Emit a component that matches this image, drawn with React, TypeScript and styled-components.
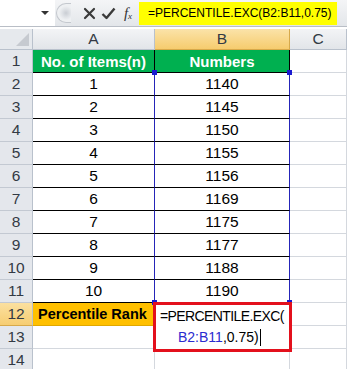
import styled, { createGlobalStyle, css } from "styled-components";

const GlobalStyle = createGlobalStyle`
  html, body {
    margin: 0;
    padding: 0;
    background: #ffffff;
    overflow: hidden;
  }
  body {
    font-family: "Liberation Sans", Arial, sans-serif;
  }
`;

type Kind = "plain" | "green" | "orange" | "data";

const items = [
  { n: 1, value: 1140 },
  { n: 2, value: 1145 },
  { n: 3, value: 1150 },
  { n: 4, value: 1155 },
  { n: 5, value: 1156 },
  { n: 6, value: 1169 },
  { n: 7, value: 1175 },
  { n: 8, value: 1177 },
  { n: 9, value: 1188 },
  { n: 10, value: 1190 }
];

export default function App() {
  return (
    <Window>
      <GlobalStyle />
      <FormulaBar>
        <NameBox>
          <DropArrow />
        </NameBox>
        <Grip />
        <BarButton gap={9}>
          <svg width="13" height="13" viewBox="0 0 13 13">
            <path
              d="M2 2 L11 11 M11 2 L2 11"
              stroke="#3a3a3a"
              strokeWidth="2.2"
              strokeLinecap="round"
            />
          </svg>
        </BarButton>
        <BarButton gap={1}>
          <svg width="15" height="13" viewBox="0 0 15 13">
            <path
              d="M1.5 7 L5.5 11 L13.5 1.5"
              stroke="#3a3a3a"
              strokeWidth="2.4"
              fill="none"
              strokeLinejoin="round"
            />
          </svg>
        </BarButton>
        <FxLabel>
          f<FxSub>x</FxSub>
        </FxLabel>
        <FormulaInput>=PERCENTILE.EXC(B2:B11,0.75)</FormulaInput>
      </FormulaBar>

      <Sheet>
        <Corner>
          <CornerTriangle />
        </Corner>
        <ColHeader>A</ColHeader>
        <ColHeader active>B</ColHeader>
        <ColHeader>C</ColHeader>

        <RowHeader>1</RowHeader>
        <Cell kind="green">No. of Items(n)</Cell>
        <Cell kind="green">Numbers</Cell>
        <Cell kind="plain" />

        {items.map((item, i) => (
          <Row key={item.n}>
            <RowHeader>{item.n + 1}</RowHeader>
            <Cell kind="data" blueRight>
              {item.n}
            </Cell>
            <Cell kind="data" blueRight>
              {i === 0 && (
                <>
                  <Handle side="left" edge="top" />
                  <Handle side="right" edge="top" />
                </>
              )}
              {i === items.length - 1 && (
                <>
                  <Handle side="left" edge="bottom" />
                  <Handle side="right" edge="bottom" />
                </>
              )}
              {item.value}
            </Cell>
            <Cell kind="plain" />
          </Row>
        ))}

        <RowHeader active>12</RowHeader>
        <Cell kind="orange">Percentile Rank</Cell>
        <Cell kind="plain">
          <EditBox>
            <EditLine tight>=PERCENTILE.EXC(</EditLine>
            <EditLine indent>
              <RefText>B2:B11</RefText>,0.75)
              <Caret />
            </EditLine>
          </EditBox>
        </Cell>
        <Cell kind="plain" />

        <RowHeader>13</RowHeader>
        <Cell kind="plain" />
        <Cell kind="plain" />
        <Cell kind="plain" />

        <RowHeader>14</RowHeader>
        <Cell kind="plain" />
        <Cell kind="plain" />
        <Cell kind="plain" />
      </Sheet>
    </Window>
  );
}

const Window = styled.div`
  width: 347px;
  height: 369px;
  overflow: hidden;
  background: #ffffff;
`;

const FormulaBar = styled.div`
  height: 27px;
  display: flex;
  align-items: center;
  background: linear-gradient(180deg, #f4f5f7 0%, #e3e6ea 100%);
  border-bottom: 1px solid #b9bec6;
  box-sizing: border-box;
  margin-bottom: 2px;
`;

const NameBox = styled.div`
  width: 55px;
  height: 26px;
  background: #ffffff;
  display: flex;
  align-items: center;
  justify-content: flex-end;
  padding-right: 6px;
  box-sizing: border-box;
`;

const DropArrow = styled.div`
  width: 0;
  height: 0;
  border-left: 4px solid transparent;
  border-right: 4px solid transparent;
  border-top: 4px solid #333333;
`;

const Grip = styled.div`
  width: 15px;
  height: 20px;
  margin-left: 1px;
  box-sizing: border-box;
  border-radius: 10px 0 0 10px;
  border: 1px solid #c4c8ce;
  border-right: none;
  background: radial-gradient(
    circle at 9px 9px,
    #c9cdd3 0,
    #dfe2e6 4px,
    #eef0f2 7px
  );
`;

const BarButton = styled.div<{ gap: number }>`
  width: 18px;
  height: 20px;
  display: flex;
  align-items: center;
  justify-content: center;
  margin-left: ${(p) => p.gap}px;
`;

const FxLabel = styled.div`
  width: 16px;
  margin-left: 3px;
  display: flex;
  align-items: baseline;
  justify-content: center;
  font-family: "Liberation Serif", "Times New Roman", serif;
  font-style: italic;
  font-size: 15px;
  color: #333333;
  line-height: 1;
`;

const FxSub = styled.span`
  font-size: 9px;
  position: relative;
  top: 1px;
`;

const FormulaInput = styled.div`
  width: 198px;
  height: 23px;
  margin-left: 3px;
  background: #ffff00;
  color: #000000;
  font-size: 12px;
  line-height: 23px;
  padding-left: 9px;
  box-sizing: border-box;
  white-space: nowrap;
`;

const Sheet = styled.div`
  display: grid;
  grid-template-columns: 33px 122px 135px 57px;
  grid-template-rows: 21px repeat(14, 23px);
  font-size: 15.5px;
  color: #000000;
`;

const Row = styled.div`
  display: contents;
`;

const headerBase = css`
  box-sizing: border-box;
  display: flex;
  align-items: center;
  justify-content: center;
  color: #333a44;
  border-right: 1px solid #b9c1cc;
  border-bottom: 1px solid #b9c1cc;
`;

const Corner = styled.div`
  ${headerBase};
  position: relative;
  background: #e6e9ed;
`;

const CornerTriangle = styled.div`
  position: absolute;
  right: 3px;
  bottom: 3px;
  width: 0;
  height: 0;
  border-left: 13px solid transparent;
  border-bottom: 13px solid #c6cad0;
`;

const ColHeader = styled.div<{ active?: boolean }>`
  ${headerBase};
  background: ${(p) =>
    p.active
      ? "linear-gradient(180deg, #fbe3a9 0%, #f6cc6e 100%)"
      : "linear-gradient(180deg, #f3f4f6 0%, #e2e5e9 100%)"};
  border-right-color: ${(p) => (p.active ? "#d7a94a" : "#b9c1cc")};
  border-bottom-color: ${(p) => (p.active ? "#d7a94a" : "#b9c1cc")};
`;

const RowHeader = styled.div<{ active?: boolean }>`
  ${headerBase};
  background: ${(p) =>
    p.active ? "linear-gradient(180deg, #fbe0a0 0%, #f6cd72 100%)" : "#e4e7ec"};
  border-bottom-color: ${(p) => (p.active ? "#d7a94a" : "#c3c9d2")};
`;

const Cell = styled.div<{ kind: Kind; blueRight?: boolean }>`
  position: relative;
  box-sizing: border-box;
  display: flex;
  align-items: center;
  justify-content: center;
  white-space: nowrap;
  border-right: 1px solid #d4d8de;
  border-bottom: 1px solid #d4d8de;

  ${(p) =>
    p.kind === "green" &&
    css`
      background: #00b050;
      color: #ffffff;
      font-weight: 700;
      font-size: 15px;
      border-right-color: #000000;
      border-bottom-color: #000000;
    `}

  ${(p) =>
    p.kind === "data" &&
    css`
      border-right-color: ${p.blueRight ? "#2525b8" : "#000000"};
      border-bottom-color: #000000;
    `}

  ${(p) =>
    p.kind === "orange" &&
    css`
      background: #ffc000;
      color: #000000;
      font-weight: 700;
      font-size: 14.5px;
      justify-content: flex-start;
      padding-left: 5px;
      border-right-color: #000000;
      border-bottom-color: #e0a800;
    `}
`;

const Handle = styled.span<{ side: "left" | "right"; edge: "top" | "bottom" }>`
  position: absolute;
  width: 5px;
  height: 5px;
  background: #1a1ad0;
  ${(p) => (p.side === "left" ? "left: -3px;" : "right: -3px;")}
  ${(p) => (p.edge === "top" ? "top: -3px;" : "bottom: -3px;")}
  z-index: 2;
`;

const EditBox = styled.div`
  position: absolute;
  left: -2px;
  top: -1px;
  width: 139px;
  height: 50px;
  box-sizing: border-box;
  border: 3px solid #e3101c;
  background: #ffffff;
  z-index: 3;
  display: flex;
  flex-direction: column;
  justify-content: center;
  font-size: 14px;
  color: #000000;
  padding-left: 4px;
  padding-bottom: 1px;
`;

const EditLine = styled.div<{ indent?: boolean; tight?: boolean }>`
  height: 21px;
  line-height: 21px;
  display: flex;
  align-items: center;
  white-space: pre;
  letter-spacing: ${(p) => (p.tight ? "-0.6px" : "0")};
  padding-left: ${(p) => (p.indent ? "18px" : "0")};
`;

const RefText = styled.span`
  color: #2b2bcf;
`;

const Caret = styled.span`
  display: inline-block;
  width: 1px;
  height: 17px;
  background: #000000;
  margin-left: 1px;
`;
